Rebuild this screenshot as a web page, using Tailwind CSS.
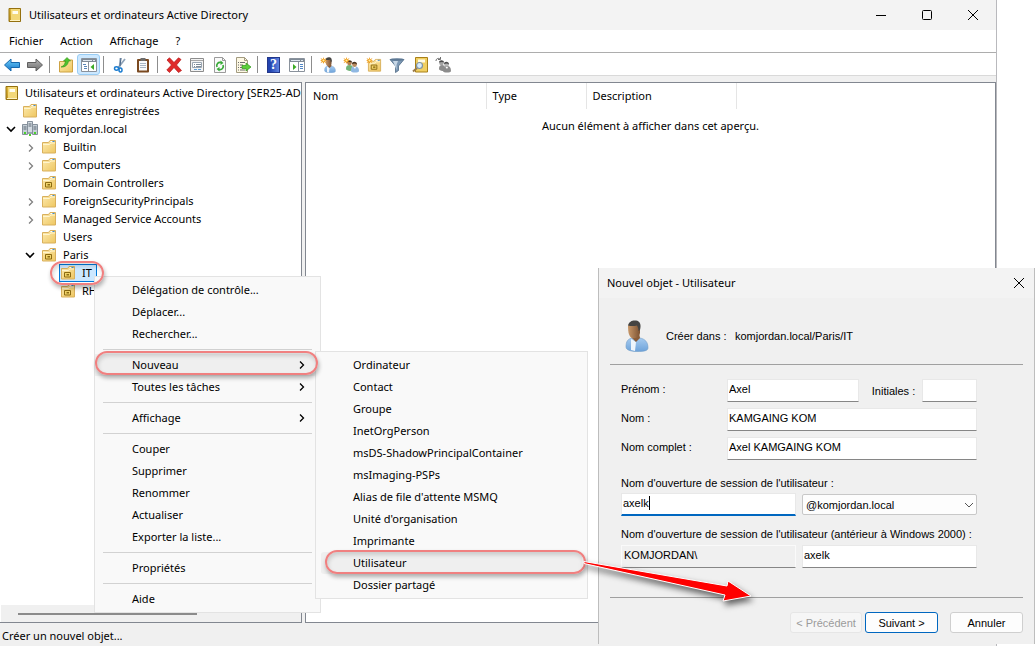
<!DOCTYPE html>
<html lang="fr">
<head>
    <meta charset="UTF-8">
    <meta name="viewport" content="width=device-width, initial-scale=1.0">
    <title>Utilisateurs et ordinateurs Active Directory</title>
    <script src="https://cdn.jsdelivr.net/npm/@tailwindcss/browser@4"></script>
</head>
<body class="relative h-screen overflow-hidden bg-white font-['Noto_Sans',sans-serif] text-[11px] leading-[18px] text-black">

    <!-- Icon definitions -->
    <svg class="absolute size-0">
        <defs>
            <linearGradient id="gold" x1="0" y1="0" x2="1" y2="1">
                <stop offset="0" stop-color="#fdebb0"/>
                <stop offset="1" stop-color="#eec660"/>
            </linearGradient>
            <linearGradient id="brass" x1="0" y1="0" x2="1" y2="1">
                <stop offset="0" stop-color="#e5bd3c"/>
                <stop offset="1" stop-color="#a37410"/>
            </linearGradient>
            <linearGradient id="blue" x1="0" y1="0" x2="0" y2="1">
                <stop offset="0" stop-color="#6fd0fb"/>
                <stop offset="1" stop-color="#1474c8"/>
            </linearGradient>
            <linearGradient id="grey" x1="0" y1="0" x2="0" y2="1">
                <stop offset="0" stop-color="#b5b5b5"/>
                <stop offset="1" stop-color="#6c6c6c"/>
            </linearGradient>
            <linearGradient id="skin" x1="0" y1="0" x2="1" y2="0">
                <stop offset="0" stop-color="#c8986a"/>
                <stop offset="1" stop-color="#7c5232"/>
            </linearGradient>
            <linearGradient id="shirt" x1="0" y1="0" x2="0" y2="1">
                <stop offset="0" stop-color="#a6cbf0"/>
                <stop offset="1" stop-color="#6ea3da"/>
            </linearGradient>
        </defs>
        <symbol id="book" viewBox="0 0 16 16">
            <path d="M2 1.500h11.500v13H2z" fill="url(#brass)" stroke="#94700f"/>
            <path d="M4 2h9v11H4z" fill="#f3d878"/>
            <path d="M5.500 4h5.500v3H5.500z" fill="#fffdf0"/>
            <path d="M3 13.500h10" stroke="#fff3c4"/>
        </symbol>
        <symbol id="folder" viewBox="0 0 16 16">
            <path d="M1.500 3.500h6l1.500-2h5.500v12.500h-13z" fill="url(#gold)" stroke="#d9b05c"/>
            <path d="M2 5.500h6.500l1.300-1.500H14" fill="none" stroke="#fff5cf"/>
            <path d="M9.500 2.500h2" stroke="#fff"/>
            <path d="M11.500 2.500h2" stroke="#3a8ddc"/>
        </symbol>
        <symbol id="ou" viewBox="0 0 16 16">
            <use href="#folder"/>
            <path d="M4.500 7.500h6v4.500h-6z" fill="#f2d469" stroke="#8b6a12"/>
            <path d="M6.500 9h2.500v1.500H6.500z" fill="#8b6a12"/>
        </symbol>
        <symbol id="domain" viewBox="0 0 16 16">
            <path d="M5.500 .5h5v11h-5z" fill="#d3dbe2" stroke="#86919c"/>
            <path d="M.5 3.500h5v10h-5zM10.500 3.500h5v10h-5z" fill="#c6d0d8" stroke="#86919c"/>
            <path d="M6.500 3h3M6.500 5h3M1.500 6h3M1.500 8h3M11.500 6h3M11.500 8h3" stroke="#5b6773"/>
            <path d="M2 11h2v2H2zM12 11h2v2h-2zM7 13h2v2H7z" fill="#4bd12c"/>
            <path d="M6 11h4v2H6z" fill="#9aa5b0"/>
        </symbol>
        <symbol id="chevron" viewBox="0 0 8 8">
            <path d="M2 .5 5.500 4 2 7.500" fill="none" stroke="currentColor" stroke-width="1.300"/>
        </symbol>
        <symbol id="open" viewBox="0 0 10 8">
            <path d="M1 2 5 6l4-4" fill="none" stroke="currentColor" stroke-width="1.600"/>
        </symbol>
        <symbol id="person" viewBox="0 0 24 32">
            <path d="M1 27c0-6 2-8 6-9l8 0c5 1 8 4 8 10 0 3-5 3.500-11 3.500S1 30 1 27z" fill="url(#shirt)" stroke="#6f9cc8" stroke-width=".6"/>
            <path d="M6 19l5 3-1 9-4-1z" fill="#eef5fc"/>
            <path d="M6 14l8-1 1 5-4 4-4-4z" fill="#8a5c38"/>
            <path d="M3 6c1-3 11-3 12 1v6c-1 4-4 6-8 5-3-1-4-6-4-12z" fill="url(#skin)"/>
            <path d="M3 5.500C4 1 8 0 11 .5c4 .5 5.500 4 4 9.500l-1.500 1c0-2-.5-4-1.500-5.500-3 .8-6 .8-9 0z" fill="#454442"/>
        </symbol>
        <symbol id="star" viewBox="0 0 8 8">
            <path d="M4 0l.8 2.500L7.500 1 5.800 3.300 8 4l-2.200.8L7.500 7 4.800 5.600 4 8l-.8-2.400L.5 7l1.600-2.200L0 4l2.100-.7L.5 1l2.700 1.500z" fill="#f09d1c"/>
            <circle cx="4" cy="4" r="1.200" fill="#fff0a0"/>
        </symbol>
        <symbol id="two" viewBox="0 0 16 16">
            <path d="M3 12c0-3 1-4 3.500-4s3.500 1 3.500 4-7 2-7 0z" fill="#72b377"/>
            <path d="M8 14c0-4 1-4.500 4-4.500s4 2 4 4.500c0 2-8 2-8 0z" fill="#8fb8e2"/>
            <path d="M10.500 10l1.500 2 1-2z" fill="#fff"/>
            <circle cx="6.500" cy="6" r="2.300" fill="#b07f52"/>
            <circle cx="11.500" cy="7.500" r="2.400" fill="#b98a5e"/>
            <path d="M4 5.500C4 2.500 9 2.500 9 5.500L7 5zM9 7c0-3 5-3 5 .5L12 6.500z" fill="#4a3623"/>
        </symbol>
    </svg>

    <!-- Main window -->
    <div class="mr-[38px] flex h-full flex-col border-r border-[#b9b9bd] bg-[#f0f0f0]">
        <header class="flex h-[30px] shrink-0 items-center bg-[#f3f3f3] pl-[7px]">
            <svg class="size-4"><use href="#book"/></svg>
            <h1 class="ml-[6px] flex-1">Utilisateurs et ordinateurs Active Directory</h1>
            <button aria-label="Réduire" class="flex w-[46px] justify-center"><svg class="size-3" viewBox="0 0 12 12"><path d="M1 6.500h10" stroke="#000"/></svg></button>
            <button aria-label="Agrandir" class="flex w-[46px] justify-center"><svg class="size-3" viewBox="0 0 12 12"><rect x="1.500" y="1.500" width="9" height="9" rx="1" fill="none" stroke="#000"/></svg></button>
            <button aria-label="Fermer" class="flex w-[46px] justify-center"><svg class="size-3" viewBox="0 0 12 12"><path d="M1 1l10 10M11 1 1 11" stroke="#000"/></svg></button>
        </header>

        <nav class="flex h-[23px] shrink-0 items-center gap-[17px] border-b border-[#adadad] bg-white pl-[9px]">
            <button>Fichier</button>
            <button>Action</button>
            <button>Affichage</button>
            <button>?</button>
        </nav>

        <!-- Toolbar -->
        <div class="flex h-[23px] shrink-0 items-center border-b border-[#d9d9d9] bg-white pt-px">
            <button aria-label="Précédent" class="flex w-[23px] justify-center"><svg class="size-4" viewBox="0 0 16 16"><path d="M.5 8 7 2v3.500h8.500v5H7V14z" fill="url(#blue)" stroke="#1768ad"/></svg></button>
            <button aria-label="Suivant" class="flex w-[23px] justify-center"><svg class="size-4" viewBox="0 0 16 16"><path d="M15.500 8 9 2v3.500H.5v5H9V14z" fill="url(#grey)" stroke="#5f5f5f"/></svg></button>
            <span class="mr-1 ml-[3px] h-[17px] w-px bg-[#8d8d8d]"></span>
            <button aria-label="Dossier parent" class="flex w-[23px] justify-center"><svg class="size-4" viewBox="0 0 16 16"><path d="M1.500 4.500h7l1-1.500h5v12h-13z" fill="url(#gold)" stroke="#cda243"/><path d="M3 10c3-1 4-3 4.500-6H5.500L9 .5 12.500 4h-2C10 8 7 10.500 3 10z" fill="#4fc22f" stroke="#2f9418" stroke-width=".6"/></svg></button>
            <button aria-label="Arborescence" class="flex h-[21px] w-[23px] items-center justify-center rounded-[3px] border border-[#99cdf5] bg-[#cce8ff]"><svg class="size-4 shrink-0" viewBox="0 0 16 16"><path d="M.5 1.500h15v13H.5z" fill="#fff" stroke="#8a929c"/><path d="M1 2h14v3H1z" fill="#7f8a96"/><path d="M2 3.500h9M12 3.500h2" stroke="#dfe6ee"/><path d="M7.500 5v9" stroke="#8a929c"/><path d="M2 7.500h3M3 9.500h3M3 11.500h3" stroke="#5a86b8"/><path d="M13 7v6L9.500 10z" fill="#3cab26"/></svg></button>
            <span class="mr-1 ml-[3px] h-[17px] w-px bg-[#8d8d8d]"></span>
            <button aria-label="Couper" class="flex w-[23px] justify-center"><svg class="size-4" viewBox="0 0 16 16"><path d="M8.500 1 7.500 11M13 2 6 11" stroke="#8fa3b8" stroke-width="1.800"/><path d="M9 1 8 9" stroke="#4b6788"/><ellipse cx="4.500" cy="11.500" rx="2" ry="1.700" fill="none" stroke="#1b7cd0" stroke-width="1.500"/><ellipse cx="8.500" cy="13" rx="1.500" ry="2" fill="none" stroke="#1b7cd0" stroke-width="1.500"/></svg></button>
            <button aria-label="Coller" class="flex w-[23px] justify-center"><svg class="size-4" viewBox="0 0 16 16"><rect x="2" y="2" width="12" height="13.500" rx="1" fill="#7b4a21"/><path d="M4 4h8v9.500H4z" fill="#fafafa"/><path d="M5.500 1h5v3h-5z" fill="#6d6d6d"/><path d="M5 6.500h6M5 8.500h6M5 10.500h6" stroke="#a9b6c4"/></svg></button>
            <span class="mr-1 ml-[3px] h-[17px] w-px bg-[#8d8d8d]"></span>
            <button aria-label="Supprimer" class="flex w-[23px] justify-center"><svg class="size-4" viewBox="0 0 16 16"><path d="M1 3 3.500.8 8 5.500 12.500.8 15 2.500 10.500 8l5 5.500-3 2L8 10.500l-4.500 5L.8 13 5.500 8z" fill="#e02b2b" stroke="#b31515" stroke-width=".7"/></svg></button>
            <button aria-label="Propriétés" class="flex w-[23px] justify-center"><svg class="size-4" viewBox="0 0 16 16"><path d="M1.500 1.500h13v13h-13z" fill="#f3f3f3" stroke="#8c8c8c"/><path d="M2 3.500h12" stroke="#a7a7a7"/><path d="M3.500 5.500h9v5h-9z" fill="#fff" stroke="#9aa6b2"/><path d="M5 7.500h1M7 7.500h5M5 9.500h1M7 9.500h5" stroke="#7e8b98"/><path d="M5 12.500h3M9 12.500h3" stroke="#5d9fd8"/></svg></button>
            <button aria-label="Actualiser" class="flex w-[23px] justify-center"><svg class="size-4" viewBox="0 0 16 16"><path d="M2.500 .5h8l3 3v12h-11z" fill="#fafafa" stroke="#9b9b9b"/><path d="M10.500 .5v3h3" fill="none" stroke="#9b9b9b"/><path d="M5 10a3.300 3.300 0 0 1 4-4.500M11 8a3.300 3.300 0 0 1-4 4.500" fill="none" stroke="#37aa37" stroke-width="1.700"/><path d="M8.500 3.500 11.500 6l-3 2zM7.500 10v4.500L4.500 12z" fill="#37aa37"/></svg></button>
            <button aria-label="Exporter la liste" class="flex w-[23px] justify-center"><svg class="size-4" viewBox="0 0 16 16"><path d="M1.500 .5h8l3 3v12h-11z" fill="#fdf8e4" stroke="#a39b80"/><path d="M9.500 .5v3h3" fill="none" stroke="#a39b80"/><path d="M3 5.500h1M5 5.500h5M3 8h1M5 8h3M3 10.500h1M5 10.500h2M3 13h1M5 13h5" stroke="#6d6d6d"/><path d="M7 8.500h4V6l5 4-5 4v-2.500H7z" fill="#5cd03a" stroke="#31961c" stroke-width=".7"/></svg></button>
            <span class="mr-1 ml-[3px] h-[17px] w-px bg-[#8d8d8d]"></span>
            <button aria-label="Aide" class="flex w-[23px] justify-center"><span class="flex h-4 w-[13px] items-center justify-center border border-[#23378a] bg-linear-to-r from-[#2344b0] from-20% to-[#5f83e0] font-['Liberation_Serif',serif] text-[14px] font-bold text-white">?</span></button>
            <button aria-label="Volet Actions" class="flex w-[23px] justify-center"><svg class="size-4" viewBox="0 0 16 16"><path d="M.5 1.500h15v13H.5z" fill="#fff" stroke="#8a929c"/><path d="M1 2h14v3H1z" fill="#7f8a96"/><path d="M2 3.500h9M12 3.500h2" stroke="#dfe6ee"/><path d="M9.500 5v9" stroke="#8a929c"/><path d="M11 7.500h3M11 9.500h3M11 11.500h3" stroke="#4f86c6"/><path d="M4 7v6l3.500-3z" fill="#3cab26"/></svg></button>
            <span class="mr-1 ml-[3px] h-[17px] w-px bg-[#8d8d8d]"></span>
            <button aria-label="Nouvel utilisateur" class="flex w-[23px] justify-center"><svg class="size-4" viewBox="0 0 16 16"><use href="#person" x="4" y="0" width="12" height="16"/><use href="#star" width="7" height="7"/></svg></button>
            <button aria-label="Nouveau groupe" class="flex w-[23px] justify-center"><svg class="size-4" viewBox="0 0 16 16"><use href="#two" width="16" height="16"/><use href="#star" width="7" height="7"/></svg></button>
            <button aria-label="Nouvelle unité d'organisation" class="flex w-[23px] justify-center"><svg class="size-4" viewBox="0 0 16 16"><use href="#ou" x="1" y="1" width="15" height="15"/><use href="#star" width="7" height="7"/></svg></button>
            <button aria-label="Filtre" class="flex w-[23px] justify-center"><svg class="size-4" viewBox="0 0 16 16"><path d="M1 2.500h14L9.500 9v4.500l-3 2V9z" fill="#7c98b4" stroke="#4f6b87" stroke-width=".8"/><path d="M4 4h5L7.500 8v5z" fill="#c7d7e6"/><ellipse cx="8" cy="2.500" rx="7" ry="1.300" fill="#5d7894"/></svg></button>
            <button aria-label="Rechercher" class="flex w-[23px] justify-center"><svg class="size-4" viewBox="0 0 16 16"><path d="M3.500 .5h12v14.500h-12z" fill="#f0cf62" stroke="#a98018"/><path d="M6 2.500h7v3H6z" fill="#fffbe6"/><path d="M5 11 1 14.500" stroke="#9b7b4b" stroke-width="2"/><circle cx="7.500" cy="8.500" r="3" fill="#d9ecfa" stroke="#7f93a5" stroke-width="1.200"/></svg></button>
            <button aria-label="Ajouter à un groupe" class="flex w-[23px] justify-center"><svg class="size-4" viewBox="0 0 16 16"><path d="M4 12c0-3 1-4 3-4s3 1 3 4-6 2-6 0zM8 14c0-4 1-5 4-5s4 2 4 5c0 2-8 2-8 0z" fill="#8c8c8c"/><circle cx="6.500" cy="6" r="2.300" fill="#a3a3a3"/><circle cx="11.500" cy="7.500" r="2.400" fill="#b4b4b4"/><path d="M4 5.500C4 2.500 9 2.500 9 5.500L7 5zM9 7c0-3 5-3 5 .5L12 6.500z" fill="#4d4d4d"/><path d="M10.500 10l1.500 2 1-2z" fill="#fff"/><path d="M1 4c0-3 3-3 4-2M5.500 0v2.500H3" fill="none" stroke="#6e6e6e"/></svg></button>
        </div>

        <main class="mt-[6px] flex min-h-0 flex-1 gap-[3px]">
            <!-- Console tree -->
            <aside class="flex w-[302px] shrink-0 flex-col overflow-hidden border-y border-r border-[#828790] bg-white">
                <ul class="flex-1 pt-px whitespace-nowrap">
                    <li class="flex h-[18px] items-center pl-1"><svg class="mr-[5px] size-4 shrink-0"><use href="#book"/></svg>Utilisateurs et ordinateurs Active Directory [SER25-AD</li>
                    <li class="flex h-[18px] items-center gap-[6px] pl-[22px]"><svg class="size-4"><use href="#folder"/></svg>Requêtes enregistrées</li>
                    <li class="flex h-[18px] items-center gap-[6px] pl-[6px]"><svg class="h-2 w-[10px]"><use href="#open"/></svg><svg class="size-4"><use href="#domain"/></svg>komjordan.local</li>
                    <li class="flex h-[18px] items-center gap-[6px] pl-[27px]"><svg class="mt-[2px] size-2 text-[#808080]"><use href="#chevron"/></svg><svg class="size-4"><use href="#folder"/></svg>Builtin</li>
                    <li class="flex h-[18px] items-center gap-[6px] pl-[27px]"><svg class="mt-[2px] size-2 text-[#808080]"><use href="#chevron"/></svg><svg class="size-4"><use href="#folder"/></svg>Computers</li>
                    <li class="flex h-[18px] items-center gap-[6px] pl-[41px]"><svg class="size-4"><use href="#ou"/></svg>Domain Controllers</li>
                    <li class="flex h-[18px] items-center gap-[6px] pl-[27px]"><svg class="mt-[2px] size-2 text-[#808080]"><use href="#chevron"/></svg><svg class="size-4"><use href="#folder"/></svg>ForeignSecurityPrincipals</li>
                    <li class="flex h-[18px] items-center gap-[6px] pl-[27px]"><svg class="mt-[2px] size-2 text-[#808080]"><use href="#chevron"/></svg><svg class="size-4"><use href="#folder"/></svg>Managed Service Accounts</li>
                    <li class="flex h-[18px] items-center gap-[6px] pl-[41px]"><svg class="size-4"><use href="#folder"/></svg>Users</li>
                    <li class="flex h-[18px] items-center gap-[6px] pl-[25px]"><svg class="h-2 w-[10px]"><use href="#open"/></svg><svg class="size-4"><use href="#ou"/></svg>Paris</li>
                    <li class="flex h-[18px] items-center pl-[59px]"><span class="flex h-[18px] items-center gap-[6px] border border-[#0078d7] bg-[#cce8ff] pr-1"><svg class="size-4"><use href="#ou"/></svg>IT</span></li>
                    <li class="flex h-[18px] items-center gap-[6px] pl-[60px]"><svg class="size-4"><use href="#ou"/></svg>RH</li>
                </ul>
                <div class="ml-px flex h-[17px] items-center bg-[#f0f0f0] pl-[17px]"><span class="h-[2px] w-[179px] bg-[#8b8b8b]"></span></div>
            </aside>

            <!-- Result list -->
            <section class="flex-1 border border-[#828790] bg-white">
                <table class="w-full table-fixed border-collapse text-left">
                    <thead>
                        <tr class="h-[26px]">
                            <th class="w-[180px] border-r border-[#e5e5e5] pl-[7px] font-normal">Nom</th>
                            <th class="w-[100px] border-r border-[#e5e5e5] pl-[6px] font-normal">Type</th>
                            <th class="w-[150px] border-r border-[#e5e5e5] pl-[6px] font-normal">Description</th>
                            <th></th>
                        </tr>
                    </thead>
                    <tbody>
                        <tr><td colspan="4" class="pt-2 text-center">Aucun élément à afficher dans cet aperçu.</td></tr>
                    </tbody>
                </table>
            </section>
        </main>

        <footer class="flex h-[23px] shrink-0 items-center pt-[2px] pl-[2px]">Créer un nouvel objet...</footer>
    </div>

    <!-- Context menu -->
    <ul class="absolute top-[276px] left-[94px] w-[227px] border border-[#e3e3e3] bg-[#f9f9f9] py-[2px] leading-[22px] [&_button]:flex [&_button]:h-[22px] [&_button]:w-full [&_button]:items-center [&_button]:justify-between [&_button]:pr-[14px] [&_button]:pl-[37px]">
        <li><button>Délégation de contrôle...</button></li>
        <li><button>Déplacer...</button></li>
        <li><button>Rechercher...</button></li>
        <li class="mx-2 my-1 h-px bg-[#d2d2d2]"></li>
        <li class="bg-[#efefef]"><button>Nouveau <svg class="size-2"><use href="#chevron"/></svg></button></li>
        <li><button>Toutes les tâches <svg class="size-2"><use href="#chevron"/></svg></button></li>
        <li class="mx-2 my-1 h-px bg-[#d2d2d2]"></li>
        <li><button>Affichage <svg class="size-2"><use href="#chevron"/></svg></button></li>
        <li class="mx-2 my-1 h-px bg-[#d2d2d2]"></li>
        <li><button>Couper</button></li>
        <li><button>Supprimer</button></li>
        <li><button>Renommer</button></li>
        <li><button>Actualiser</button></li>
        <li><button>Exporter la liste...</button></li>
        <li class="mx-2 my-1 h-px bg-[#d2d2d2]"></li>
        <li><button>Propriétés</button></li>
        <li class="mx-2 my-1 h-px bg-[#d2d2d2]"></li>
        <li><button>Aide</button></li>
    </ul>

    <!-- "Nouveau" submenu -->
    <ul class="absolute top-[351px] left-[315px] w-[273px] border border-[#e3e3e3] bg-[#f9f9f9] px-[5px] py-[2px] leading-[22px] [&_button]:block [&_button]:h-[22px] [&_button]:w-full [&_button]:rounded-[3px] [&_button]:pl-8 [&_button]:text-left">
        <li><button>Ordinateur</button></li>
        <li><button>Contact</button></li>
        <li><button>Groupe</button></li>
        <li><button>InetOrgPerson</button></li>
        <li><button>msDS-ShadowPrincipalContainer</button></li>
        <li><button>msImaging-PSPs</button></li>
        <li><button>Alias de file d'attente MSMQ</button></li>
        <li><button>Unité d'organisation</button></li>
        <li><button>Imprimante</button></li>
        <li><button class="bg-[#efefef]">Utilisateur</button></li>
        <li><button>Dossier partagé</button></li>
    </ul>

    <!-- New user dialog -->
    <form class="absolute top-[268px] left-[598px] w-[437px] border-x border-[#bdbdbd] bg-[#f0f0f0] pb-[11px] font-['Liberation_Sans',sans-serif] text-[11px] leading-4">
        <div class="flex h-[30px] items-center justify-between bg-[#f3f3f3] pr-[9px] pl-2 font-['Noto_Sans',sans-serif]">
            <h2>Nouvel objet - Utilisateur</h2>
            <button type="button" aria-label="Fermer"><svg class="size-3" viewBox="0 0 12 12"><path d="M1 1l10 10M11 1 1 11" stroke="#000"/></svg></button>
        </div>

        <div class="mx-[11px] flex h-[67px] items-center border-b border-[#a0a0a0] pt-[10px] pl-[15px]">
            <svg class="h-8 w-6"><use href="#person"/></svg>
            <span class="ml-[17px] w-[69px]">Créer dans :</span>
            <span>komjordan.local/Paris/IT</span>
        </div>

        <div class="pt-[14px] pr-[57px] pl-[22px]">
            <div class="grid grid-cols-[106px_1fr] items-center gap-y-[6px]">
                <label for="prenom" class="pb-[3px]">Prénom :</label>
                <div class="flex items-center">
                    <input id="prenom" type="text" value="Axel" class="h-[23px] w-[132px] border border-[#e8e8e8] border-b-[#868686] bg-white px-px pb-[3px]">
                    <label for="initiales" class="flex-1 pl-[6px] text-center">Initiales :</label>
                    <input id="initiales" type="text" class="h-[23px] w-[55px] border border-[#e8e8e8] border-b-[#868686] bg-white px-px">
                </div>
                <label for="nom" class="pb-[3px]">Nom :</label>
                <input id="nom" type="text" value="KAMGAING KOM" class="h-[23px] border border-[#e8e8e8] border-b-[#868686] bg-white px-px pb-[3px]">
                <label for="complet" class="pb-[3px]">Nom complet :</label>
                <input id="complet" type="text" value="Axel KAMGAING KOM" class="h-[23px] border border-[#e8e8e8] border-b-[#868686] bg-white px-px pb-[3px]">
            </div>

            <label for="login" class="mt-[15px] mb-[2px] block">Nom d'ouverture de session de l'utilisateur :</label>
            <div class="grid grid-cols-2 gap-[6px]">
                <div class="relative">
                    <input id="login" type="text" value="axelk" class="h-[23px] w-full border border-b-2 border-[#e8e8e8] border-b-[#0067c0] bg-white px-px pb-[2px]">
                    <span class="absolute top-[3px] left-[28px] h-[14px] w-px bg-black"></span>
                </div>
                <div class="relative">
                    <select aria-label="Suffixe UPN" class="mt-px h-[21px] w-full appearance-none rounded-[2px] border border-[#c8c8c8] bg-[#fdfdfd] pl-[3px]">
                        <option>@komjordan.local</option>
                    </select>
                    <svg class="pointer-events-none absolute top-2 right-[3px] h-2 w-[10px]" viewBox="0 0 10 8"><path d="M1 2 5 6l4-4" fill="none" stroke="#555"/></svg>
                </div>
            </div>

            <label for="login2000" class="mt-[10px] mb-[3px] block whitespace-nowrap">Nom d'ouverture de session de l'utilisateur (antérieur à Windows 2000) :</label>
            <div class="grid grid-cols-2 gap-[6px]">
                <input aria-label="Domaine" type="text" readonly value="KOMJORDAN\" class="h-[23px] border border-[#fafafa] border-b-[#868686] bg-[#f0f0f0] px-[2px] pb-[3px]">
                <input id="login2000" type="text" value="axelk" class="h-[23px] border border-[#e8e8e8] border-b-[#868686] bg-white px-px pb-[3px]">
            </div>
        </div>

        <div class="mx-[11px] mt-[29px] flex justify-end border-t border-[#a0a0a0] pt-[14px]">
            <button type="button" disabled class="mr-[3px] h-[21px] w-[72px] rounded-[3px] border border-[#e6e6e6] bg-[#f6f6f6] text-[#9b9b9b]">&lt; Précédent</button>
            <button type="button" class="mr-3 h-[21px] w-[73px] rounded-[3px] border border-[#0067c0] bg-[#fdfdfd]">Suivant &gt;</button>
            <button type="button" class="h-[21px] w-[73px] rounded-[3px] border border-[#cfcfcf] bg-[#fdfdfd]">Annuler</button>
        </div>
    </form>

    <!-- Red highlights -->
    <div class="absolute top-[261px] left-[50px] h-6 w-[54px] rounded-full border-2 border-[#f08080] shadow-[1px_3px_4px_rgba(0,0,0,0.3),inset_1px_3px_4px_rgba(0,0,0,0.15)]"></div>
    <div class="absolute top-[351px] left-[95px] h-6 w-[223px] rounded-full border-2 border-[#f08080] shadow-[1px_3px_4px_rgba(0,0,0,0.3),inset_1px_3px_4px_rgba(0,0,0,0.15)]"></div>
    <div class="absolute top-[550px] left-[325px] h-6 w-[261px] rounded-full border-2 border-[#f08080] shadow-[1px_3px_4px_rgba(0,0,0,0.3),inset_1px_3px_4px_rgba(0,0,0,0.15)]"></div>
    <svg class="pointer-events-none absolute top-[550px] left-[575px] h-[70px] w-[190px] drop-shadow-[2px_4px_3px_rgba(0,0,0,0.6)]" viewBox="0 0 190 70">
        <path d="M9 11.500 152 36 153 31 176 46 148 51 150 45 9 13.500z" fill="#ff0000" stroke="#fff" stroke-linejoin="round"/>
    </svg>
</body>
</html>
